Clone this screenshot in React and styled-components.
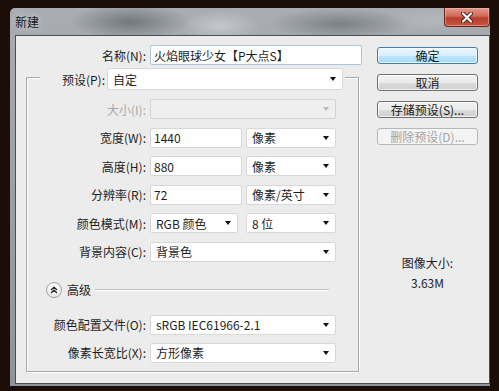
import React from "react";
import styled, { createGlobalStyle } from "styled-components";

const GlobalStyle = createGlobalStyle`
  html, body {
    margin: 0;
    padding: 0;
    background: #1b0d08;
    height: 100%;
  }
  body {
    font-family: "Noto Sans CJK SC", "Noto Sans", sans-serif;
    font-size: 12px;
    color: #1e1e1e;
  }
`;

const Page = styled.div`
  padding: 8px 0 0 10px;
`;

const Window = styled.div`
  width: 480px;
  height: 378px;
  box-sizing: border-box;
  display: flex;
  flex-direction: column;
  padding: 0 0 2px 5px;
  border-radius: 5px 5px 0 0;
  background:
    radial-gradient(ellipse 60px 18px at 120px 14px, rgba(70, 76, 82, 0.55), rgba(70, 76, 82, 0) 100%),
    radial-gradient(ellipse 40px 16px at 210px 18px, rgba(230, 232, 235, 0.45), rgba(230, 232, 235, 0) 100%),
    radial-gradient(ellipse 70px 16px at 330px 16px, rgba(70, 76, 82, 0.45), rgba(70, 76, 82, 0) 100%),
    radial-gradient(ellipse 50px 14px at 420px 12px, rgba(200, 204, 208, 0.35), rgba(200, 204, 208, 0) 100%),
    linear-gradient(to bottom, #a9adb1 0%, #9da2a6 40%, #8f9499 100%);
`;

const TitleBar = styled.div`
  height: 27px;
  display: flex;
  justify-content: space-between;
  align-items: flex-start;
  flex: none;
`;

const Title = styled.div`
  line-height: 28px;
  font-size: 12px;
  color: #141414;
  text-shadow: 0 0 6px rgba(255, 255, 255, 0.6);
`;

const CloseButton = styled.div`
  width: 46px;
  height: 19px;
  box-sizing: border-box;
  border: 1px solid #6a2418;
  border-top: none;
  border-radius: 0 0 4px 4px;
  background: linear-gradient(to bottom, #e2998c 0%, #d06a58 45%, #b63e2c 55%, #c9553f 100%);
  box-shadow: inset 0 0 0 1px rgba(255, 200, 190, 0.45);
  display: flex;
  align-items: center;
  justify-content: center;
`;

const Client = styled.div`
  flex: 1;
  background: #ececec;
  border: 1px solid #4b4f53;
  padding: 9px 0 0 10px;
  display: flex;
  gap: 15px;
`;

const LeftCol = styled.div`
  width: 336px;
  display: flex;
  flex-direction: column;
`;

const RightCol = styled.div`
  width: 101px;
  padding-top: 2px;
  display: flex;
  flex-direction: column;
  align-items: stretch;
`;

const FieldRow = styled.div`
  display: flex;
  align-items: center;
  height: 20px;
  gap: 4px;
  margin-top: ${(p) => p.$mt || 0}px;
`;

const Label = styled.div`
  width: ${(p) => p.$w}px;
  text-align: right;
  white-space: nowrap;
  color: ${(p) => (p.$disabled ? "#a9a9a9" : "#1e1e1e")};
  flex: none;
`;

const TextInput = styled.input`
  width: ${(p) => p.$w}px;
  height: 20px;
  box-sizing: border-box;
  margin: 0;
  padding: 0 3px;
  border: 1px solid ${(p) => (p.$focus ? "#a9c6de" : "#d6d6d6")};
  border-radius: 2px;
  background: #fff;
  font-family: inherit;
  font-size: 12px;
  color: #1e1e1e;
  outline: none;
  flex: none;
`;

const SelectBox = styled.div`
  width: ${(p) => p.$w}px;
  height: ${(p) => p.$h || 20}px;
  box-sizing: border-box;
  margin-left: ${(p) => p.$ml || 0}px;
  padding: 0 6px 0 5px;
  border: 1px solid ${(p) => (p.$disabled ? "#d2d2d2" : "#d8d8d8")};
  border-radius: 2px;
  background: ${(p) => (p.$disabled ? "#efefef" : "#fff")};
  display: flex;
  align-items: center;
  justify-content: space-between;
  flex: none;
  white-space: nowrap;
`;

const Arrow = styled.span`
  width: 0;
  height: 0;
  border-left: 3.5px solid transparent;
  border-right: 3.5px solid transparent;
  border-top: 4px solid ${(p) => (p.$disabled ? "#b9b9b9" : "#111")};
  flex: none;
`;

const GroupBox = styled.div`
  margin-top: 12px;
  width: 333px;
  box-sizing: border-box;
  border: 1px solid #a9a9a9;
  box-shadow: inset 1px 1px 0 #fff, 1px 1px 0 #fff;
  padding-bottom: 8px;
  display: flex;
  flex-direction: column;
`;

const Legend = styled.div`
  margin: -10px 0 0 13px;
  padding: 0 2px 0 20px;
  align-self: flex-start;
  background: #ececec;
  display: flex;
  align-items: center;
  gap: 2px;
  height: 22px;
`;

const FieldStack = styled.div`
  margin-top: 9px;
  display: flex;
  flex-direction: column;
  gap: 8.6px;
`;

const AdvancedRow = styled.div`
  margin: 20px 29px 0 19px;
  height: 16px;
  display: flex;
  align-items: center;
`;

const CircleButton = styled.div`
  width: 16px;
  height: 16px;
  box-sizing: border-box;
  border-radius: 50%;
  border: 1px solid #a2a2a2;
  background: radial-gradient(circle at 50% 35%, #ffffff 0%, #f1f1f1 55%, #d9d9d9 100%);
  display: flex;
  align-items: center;
  justify-content: center;
  flex: none;
`;

const AdvancedLabel = styled.span`
  margin-left: 5px;
  margin-right: 4px;
`;

const Rule = styled.div`
  flex: 1;
  height: 1px;
  background: #bdbdbd;
  box-shadow: 0 1px 0 #fff;
`;

const Button = styled.div`
  height: 17px;
  box-sizing: border-box;
  margin-bottom: 10px;
  border: 1px solid ${(p) => (p.$variant === "default" ? "#3c7fb1" : p.$variant === "disabled" ? "#b5b8ba" : "#707070")};
  border-radius: 3px;
  background: ${(p) =>
    p.$variant === "default"
      ? "linear-gradient(to bottom, #eaf6fd 0%, #d9f0fc 50%, #bee6fd 51%, #a7d9f5 100%)"
      : p.$variant === "disabled"
      ? "#f4f4f4"
      : "linear-gradient(to bottom, #f2f2f2 0%, #ebebeb 50%, #dddddd 51%, #cfcfcf 100%)"};
  box-shadow: inset 0 0 0 1px ${(p) => (p.$variant === "disabled" ? "transparent" : "rgba(255,255,255,0.7)")};
  color: ${(p) => (p.$variant === "disabled" ? "#a3a3a3" : "#1a1a1a")};
  display: flex;
  align-items: center;
  justify-content: center;
  line-height: 1;
  white-space: nowrap;
`;

const SizeInfo = styled.div`
  margin-top: 98px;
  display: flex;
  flex-direction: column;
  align-items: center;
  line-height: 20px;
`;

function Select({ w, h, ml, children, disabled }) {
  return (
    <SelectBox $w={w} $h={h} $ml={ml} $disabled={disabled}>
      <span>{children}</span>
      <Arrow $disabled={disabled} />
    </SelectBox>
  );
}

export default function App() {
  return (
    <>
      <GlobalStyle />
      <Page>
        <Window>
          <TitleBar>
            <Title>新建</Title>
            <CloseButton>
              <svg width="14" height="11" viewBox="0 0 14 11">
                <path d="M3 1.5 L11 9.5 M11 1.5 L3 9.5" stroke="#5a1c12" strokeWidth="4" strokeLinecap="round" />
                <path d="M3 1.5 L11 9.5 M11 1.5 L3 9.5" stroke="#ffffff" strokeWidth="2.2" strokeLinecap="round" />
              </svg>
            </CloseButton>
          </TitleBar>
          <Client>
            <LeftCol>
              <FieldRow>
                <Label $w={120}>名称(N):</Label>
                <TextInput $w={212} $focus readOnly value="火焰眼球少女【P大点S】" />
              </FieldRow>
              <GroupBox>
                <Legend>
                  <Label as="span" $w={45}>预设(P):</Label>
                  <Select w={236} h={22}>自定</Select>
                </Legend>
                <FieldStack>
                  <FieldRow>
                    <Label $w={119} $disabled>大小(I):</Label>
                    <Select w={186} disabled>{" "}</Select>
                  </FieldRow>
                  <FieldRow>
                    <Label $w={119}>宽度(W):</Label>
                    <TextInput $w={92} readOnly value="1440" />
                    <Select w={90}>像素</Select>
                  </FieldRow>
                  <FieldRow>
                    <Label $w={119}>高度(H):</Label>
                    <TextInput $w={92} readOnly value="880" />
                    <Select w={90}>像素</Select>
                  </FieldRow>
                  <FieldRow>
                    <Label $w={119}>分辨率(R):</Label>
                    <TextInput $w={92} readOnly value="72" />
                    <Select w={90}>像素/英寸</Select>
                  </FieldRow>
                  <FieldRow>
                    <Label $w={119}>颜色模式(M):</Label>
                    <Select w={88}>RGB 颜色</Select>
                    <Select w={90} ml={4}>8 位</Select>
                  </FieldRow>
                  <FieldRow>
                    <Label $w={119}>背景内容(C):</Label>
                    <Select w={186}>背景色</Select>
                  </FieldRow>
                </FieldStack>
                <AdvancedRow>
                  <CircleButton>
                    <svg width="8" height="8" viewBox="0 0 8 8">
                      <path d="M1 4 L4 1.2 L7 4 M1 7 L4 4.2 L7 7" fill="none" stroke="#2a2a2a" strokeWidth="1.3" />
                    </svg>
                  </CircleButton>
                  <AdvancedLabel>高级</AdvancedLabel>
                  <Rule />
                </AdvancedRow>
                <FieldRow $mt={17}>
                  <Label $w={119}>颜色配置文件(O):</Label>
                  <Select w={186}>sRGB IEC61966-2.1</Select>
                </FieldRow>
                <FieldRow $mt={8}>
                  <Label $w={119}>像素长宽比(X):</Label>
                  <Select w={186}>方形像素</Select>
                </FieldRow>
              </GroupBox>
            </LeftCol>
            <RightCol>
              <Button $variant="default">确定</Button>
              <Button>取消</Button>
              <Button>存储预设(S)...</Button>
              <Button $variant="disabled">删除预设(D)...</Button>
              <SizeInfo>
                <span>图像大小:</span>
                <span>3.63M</span>
              </SizeInfo>
            </RightCol>
          </Client>
        </Window>
      </Page>
    </>
  );
}
